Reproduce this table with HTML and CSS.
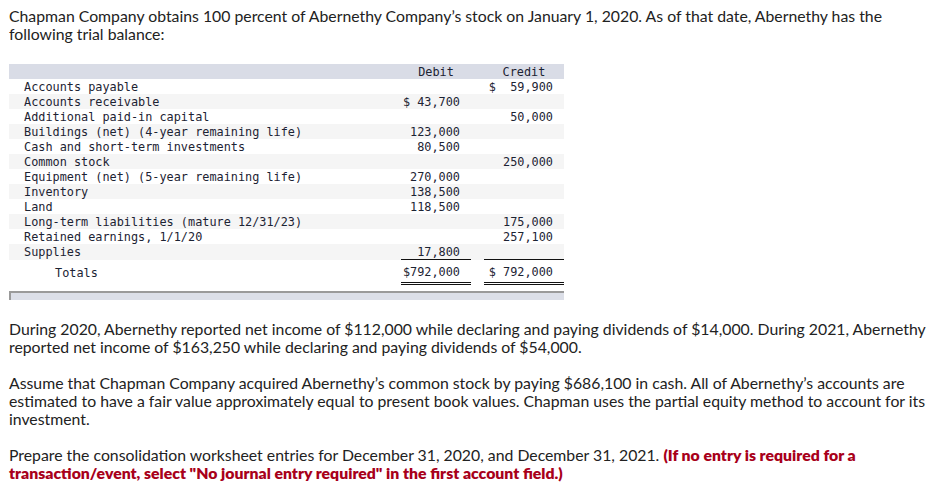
FILE: index.html
```html
<!DOCTYPE html>
<html>
<head>
<meta charset="utf-8">
<link rel="stylesheet" href="styles.css">
</head>
<body>
<p class="para first">Chapman Company obtains 100 percent of Abernethy Company’s stock on January 1, 2020. As of that date, Abernethy has the following trial balance:</p>
<div class="tb-wrap">
<table class="tb">
  <colgroup><col class="c-label"><col class="c-debit"><col class="c-gap"><col class="c-credit"></colgroup>
  <thead>
    <tr class="hd"><th></th><th class="num-h">Debit</th><th></th><th class="num-h">Credit</th></tr>
  </thead>
  <tbody>
    <tr><td class="lbl">Accounts payable</td><td class="num"></td><td></td><td class="num">$  59,900</td></tr>
    <tr class="alt"><td class="lbl">Accounts receivable</td><td class="num">$ 43,700</td><td></td><td class="num"></td></tr>
    <tr><td class="lbl">Additional paid-in capital</td><td class="num"></td><td></td><td class="num">50,000</td></tr>
    <tr class="alt"><td class="lbl">Buildings (net) (4-year remaining life)</td><td class="num">123,000</td><td></td><td class="num"></td></tr>
    <tr><td class="lbl">Cash and short-term investments</td><td class="num">80,500</td><td></td><td class="num"></td></tr>
    <tr class="alt"><td class="lbl">Common stock</td><td class="num"></td><td></td><td class="num">250,000</td></tr>
    <tr><td class="lbl">Equipment (net) (5-year remaining life)</td><td class="num">270,000</td><td></td><td class="num"></td></tr>
    <tr class="alt"><td class="lbl">Inventory</td><td class="num">138,500</td><td></td><td class="num"></td></tr>
    <tr><td class="lbl">Land</td><td class="num">118,500</td><td></td><td class="num"></td></tr>
    <tr class="alt"><td class="lbl">Long-term liabilities (mature 12/31/23)</td><td class="num"></td><td></td><td class="num">175,000</td></tr>
    <tr><td class="lbl">Retained earnings, 1/1/20</td><td class="num"></td><td></td><td class="num">257,100</td></tr>
    <tr class="alt"><td class="lbl">Supplies</td><td class="num">17,800</td><td></td><td class="num"></td></tr>
    <tr class="tot"><td class="lbl total-lbl">Totals</td><td class="num sum">$792,000</td><td></td><td class="num sum">$ 792,000</td></tr>
  </tbody>
</table>
<div class="tb-foot"></div>
</div>
<p class="para">During 2020, Abernethy reported net income of $112,000 while declaring and paying dividends of $14,000. During 2021, Abernethy reported net income of $163,250 while declaring and paying dividends of $54,000.</p>
<p class="para">Assume that Chapman Company acquired Abernethy’s common stock by paying $686,100 in cash. All of Abernethy’s accounts are estimated to have a fair value approximately equal to present book values. Chapman uses the partial equity method to account for its investment.</p>
<p class="para">Prepare the consolidation worksheet entries for December 31, 2020, and December 31, 2021. <strong class="warn">(If no entry is required for a transaction/event, select "No journal entry required" in the first account field.)</strong></p>
</body>
</html>
```
FILE: styles.css
```css
html, body {
  margin: 0;
  padding: 0;
  background: #fff;
}
body {
  padding: 7px 8px 0 9px;
  font-family: "Lato", "Noto Sans", sans-serif;
  font-size: 15.8px;
  line-height: 18px;
  color: #222;
}
.para {
  margin: 0 0 18px 0;
}
.para.first {
  margin-bottom: 21px;
}
.warn {
  color: #a8001a;
  font-weight: 800;
}
.tb-wrap {
  width: 555px;
  margin-bottom: 20px;
}
.tb {
  width: 555px;
  border-collapse: collapse;
  table-layout: fixed;
  font-family: "DejaVu Sans Mono", "Liberation Mono", monospace;
  font-size: 11.85px;
  color: #1c2333;
}
.c-label { width: 392px; }
.c-debit { width: 70px; }
.c-gap { width: 13px; }
.c-credit { width: 80px; }
.tb th, .tb td {
  padding: 1px 0 0 0;
  height: 14px;
  line-height: 14px;
  white-space: pre;
  font-weight: normal;
}
.hd th {
  background: #d9dce6;
}
.num-h {
  text-align: center;
}
.num {
  text-align: right;
  padding-right: 11px !important;
}
.lbl {
  padding-left: 15px !important;
}
.alt td {
  background: #f5f5f5;
}
.tot td {
  height: 19px;
  padding-top: 3px;
  line-height: 19px;
}
.total-lbl {
  padding-left: 46px !important;
}
.sum {
  border-top: 1px solid #111;
  border-bottom: 3px double #111;
}
.tb-foot {
  margin-top: 6px;
  height: 7px;
  background: #dcdfe8;
  border-top: 2px solid #9a9a9a;
  border-left: 2px solid #9a9a9a;
}
```
